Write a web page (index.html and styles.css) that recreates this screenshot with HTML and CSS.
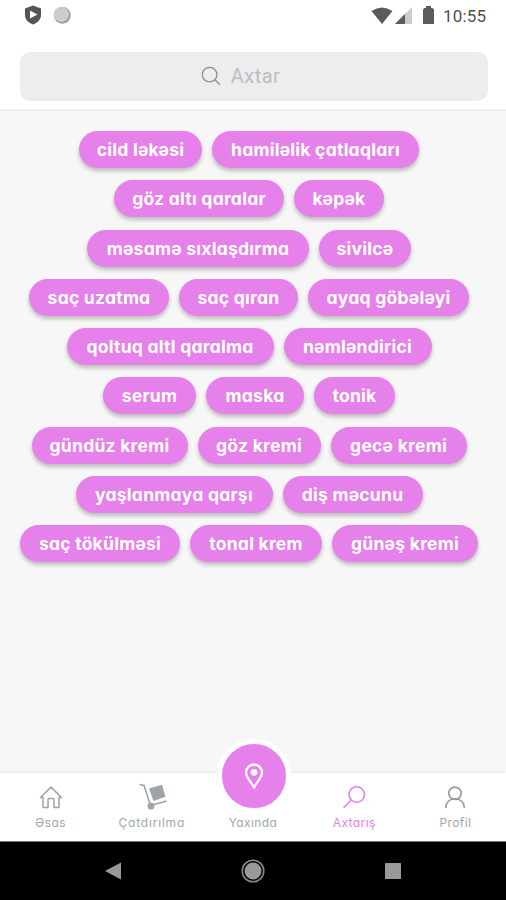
FILE: index.html
```
<!doctype html>
<html lang="az">
 <head>
  <meta charset="UTF-8">
  <meta name="viewport" content="width=device-width, initial-scale=1.0">
  <title>Axtarış</title>
  <link rel="stylesheet" href="styles.css">
 </head>
 <body>
  <div class="status-bar">
   <svg class="status-shield" viewBox="0 0 18 20" width="18" height="20"><path d="M9 .5 17 3.500V10c0 4.500-3.500 8-8 9.500C4.500 18 1 14.500 1 10V3.500z" fill="#555"/><path d="M6 5.500v8l7.500-4z" fill="#fff"/></svg>
   <svg class="status-dot" viewBox="0 0 18 18" width="18" height="18"><circle cx="9.300" cy="9.300" r="8.400" fill="#999"/><circle cx="8.500" cy="8.500" r="7.600" fill="#ccc"/></svg>
   <span class="spacer"></span>
   <svg class="status-wifi" viewBox="0 0 22 17" width="22" height="17"><path d="M.5 4Q11-3 21.500 4L11 17z" fill="#5b5b5b"/></svg>
   <svg class="status-signal" viewBox="0 0 17 17" width="17" height="17"><path d="M17 0v17H0z" fill="#ccc"/><path d="M10 7v10H0z" fill="#5b5b5b"/></svg>
   <svg class="status-battery" viewBox="0 0 11 18" width="11" height="18"><path d="M3 0h5v2h1.500L11 3.500V18H0V3.500L1.500 2H3z" fill="#5b5b5b"/></svg>
   <span class="time">10:55</span>
  </div>
  <header class="header">
   <div class="search">
    <svg viewBox="0 0 20 20" width="20" height="20" fill="none" stroke="#8e8e90" stroke-width="1.300"><circle cx="8.600" cy="8.600" r="7.300"/><path d="M13.800 13.800 19 18.800"/></svg>
    <span>Axtar</span>
   </div>
  </header>
  <main class="tags">
   <div class="tag-row"><span class="tag w-123">cild ləkəsi</span><span class="tag w-207">hamiləlik çatlaqları</span></div>
   <div class="tag-row"><span class="tag w-170">göz altı qaralar</span><span class="tag w-90">kəpək</span></div>
   <div class="tag-row"><span class="tag w-222">məsamə sıxlaşdırma</span><span class="tag w-92">sivilcə</span></div>
   <div class="tag-row"><span class="tag w-140">saç uzatma</span><span class="tag w-119">saç qıran</span><span class="tag w-161">ayaq göbələyi</span></div>
   <div class="tag-row"><span class="tag w-207">qoltuq altl qaralma</span><span class="tag w-148">nəmləndirici</span></div>
   <div class="tag-row"><span class="tag w-93">serum</span><span class="tag w-98">maska</span><span class="tag w-81">tonik</span></div>
   <div class="tag-row"><span class="tag w-156">gündüz kremi</span><span class="tag w-123">göz kremi</span><span class="tag w-136">gecə kremi</span></div>
   <div class="tag-row"><span class="tag w-197">yaşlanmaya qarşı</span><span class="tag w-140">diş məcunu</span></div>
   <div class="tag-row"><span class="tag w-160">saç tökülməsi</span><span class="tag w-132">tonal krem</span><span class="tag w-146">günəş kremi</span></div>
  </main>
  <nav class="tab-bar">
   <a class="tab">
    <svg viewBox="0 0 24 24" width="24" height="24" fill="none" stroke="#9fa3a7" stroke-width="1.500" stroke-linejoin="round"><path d="M1.500 12.500 12 2l10.500 10.500H20V22.500h-5V14.500q0-1-1-1h-4q-1 0-1 1v8H4V12.500z"/></svg>
    <span>Əsas</span>
   </a>
   <a class="tab">
    <svg class="icon-cart" viewBox="0 0 28 28" width="28" height="28"><path d="m10 5.500 13-3.700 3.500 12-12 4.200z" fill="#9fa4aa"/><path d="M.5 1.500 5 2.500 11.500 22.500 27.500 18" fill="none" stroke="#9fa4aa" stroke-width="1.600"/><circle cx="12" cy="23" r="3.500" fill="#9fa4aa"/></svg>
    <span class="label-wide">Çatdırılma</span>
   </a>
   <a class="tab">
    <div class="tab-main">
     <svg viewBox="0 0 20 26" width="20" height="26" fill="none" stroke="#fff" stroke-width="2.300"><path d="M10 24.500C7.500 19.500 2 14.500 2 9.500a8 8 0 0 1 16 0c0 5-5.500 10-8 15z"/><circle cx="10" cy="9.300" r="3.400" fill="#fff" stroke="none"/></svg>
    </div>
    <span>Yaxında</span>
   </a>
   <a class="tab active">
    <svg viewBox="0 0 24 24" width="24" height="24" fill="none" stroke="#e77df0" stroke-width="1.600" stroke-linecap="round"><circle cx="14.700" cy="9.500" r="7.700"/><path d="m9.300 15-7.300 7.300"/></svg>
    <span>Axtarış</span>
   </a>
   <a class="tab">
    <svg viewBox="0 0 24 24" width="24" height="24" fill="none" stroke="#96999c" stroke-width="1.600" stroke-linecap="round"><circle cx="12" cy="8.300" r="6.200"/><path d="M2.700 22.500c0-5 4-8.700 9.300-8.700s9.300 3.700 9.300 8.700"/></svg>
    <span>Profil</span>
   </a>
  </nav>
  <div class="system-nav">
   <svg viewBox="0 0 16 18" width="16" height="18"><path d="M0 9 16 .5v17z" fill="#999"/></svg>
   <svg viewBox="0 0 24 24" width="24" height="24"><circle cx="12" cy="12" r="10.800" fill="none" stroke="#888" stroke-width="1.600"/><circle cx="12" cy="12" r="8.500" fill="#999"/></svg>
   <svg viewBox="0 0 16 16" width="16" height="16"><rect width="16" height="16" rx=".5" fill="#999"/></svg>
  </div>
 </body>
</html>
```
FILE: styles.css
```
* {
    box-sizing: border-box;
}

body {
    display: flex;
    flex-direction: column;
    width: 506px;
    height: 900px;
    margin: 0;
    background: #f7f7f7;
    font-family: Inter, sans-serif;
    font-feature-settings: "cv11";
    overflow: hidden;
}

svg {
    display: block;
    flex: none;
}

.status-bar {
    display: flex;
    align-items: center;
    height: 32px;
    padding: 0 19px 2px 24px;
    background: #fff;
}

.status-dot {
    margin-left: 11px;
}

.spacer {
    flex: 1;
}

.status-wifi {
    margin-right: 1px;
}

.status-signal {
    margin-left: 1px;
}

.status-battery {
    margin-left: 11px;
}

.time {
    width: 44px;
    margin: 2px 0 0 9px;
    font: 400 17px Roboto, sans-serif;
    letter-spacing: 0.2px;
    color: #505050;
}

.header {
    height: 79px;
    padding: 20px 18px 0 20px;
    background: #fff;
    border-bottom: 2px solid #ededed;
}

.search {
    display: flex;
    justify-content: center;
    align-items: center;
    gap: 10px;
    height: 49px;
    padding-right: 27px;
    border-radius: 10px;
    background: #ebedee;
    font: 400 20px Roboto, sans-serif;
    letter-spacing: 0.5px;
    color: #bdbdbf;
}

.search svg {
    margin-top: -2px;
}

.search span {
    margin-top: -1px;
}

.tags {
    flex: 1;
    display: flex;
    flex-direction: column;
    gap: 12.25px;
    padding: 20px 8px 0 0;
}

.tag-row {
    display: flex;
    justify-content: center;
    gap: 10px;
}

.tag {
    flex: none;
    height: 37px;
    border-radius: 19px;
    background: #e680ea;
    box-shadow: 0 3px 4px rgba(0, 0, 0, 0.24);
    font-size: 17.5px;
    font-weight: 700;
    line-height: 37px;
    letter-spacing: 0.25px;
    text-align: center;
    color: #fff;
    white-space: nowrap;
}

.w-81 { width: 81px; }
.w-90 { width: 90px; }
.w-92 { width: 92px; }
.w-93 { width: 93px; }
.w-98 { width: 98px; }
.w-119 { width: 119px; }
.w-123 { width: 123px; }
.w-132 { width: 132px; }
.w-136 { width: 136px; }
.w-140 { width: 140px; }
.w-146 { width: 146px; }
.w-148 { width: 148px; }
.w-156 { width: 156px; }
.w-160 { width: 160px; }
.w-161 { width: 161px; }
.w-170 { width: 170px; }
.w-197 { width: 197px; }
.w-207 { width: 207px; }
.w-222 { width: 222px; }

.tab-bar {
    display: flex;
    height: 68px;
    background: #fff;
    box-shadow: 0 -1px 3px rgba(0, 0, 0, 0.06);
}

.tab {
    position: relative;
    flex: 1;
    display: flex;
    flex-direction: column;
    justify-content: flex-end;
    align-items: center;
    gap: 6px;
    padding-bottom: 10px;
    font-size: 12px;
    line-height: 16px;
    letter-spacing: 0.4px;
    color: #a4a6a8;
}

.label-wide {
    letter-spacing: 0.8px;
}

.icon-cart {
    margin: 0 0 -2px 2px;
}

.tab.active {
    color: #e77df0;
}

/* raised button over the bar's top edge */
.tab-main {
    position: absolute;
    top: -34px;
    left: 14.6px;
    display: flex;
    justify-content: center;
    align-items: center;
    width: 74px;
    height: 74px;
    border: 5px solid #fff;
    border-radius: 50%;
    background: #e680ea;
}

.system-nav {
    display: flex;
    justify-content: space-between;
    align-items: center;
    height: 59px;
    padding: 0 105px;
    border-top: 1px solid #777;
    background: #000;
}
```
